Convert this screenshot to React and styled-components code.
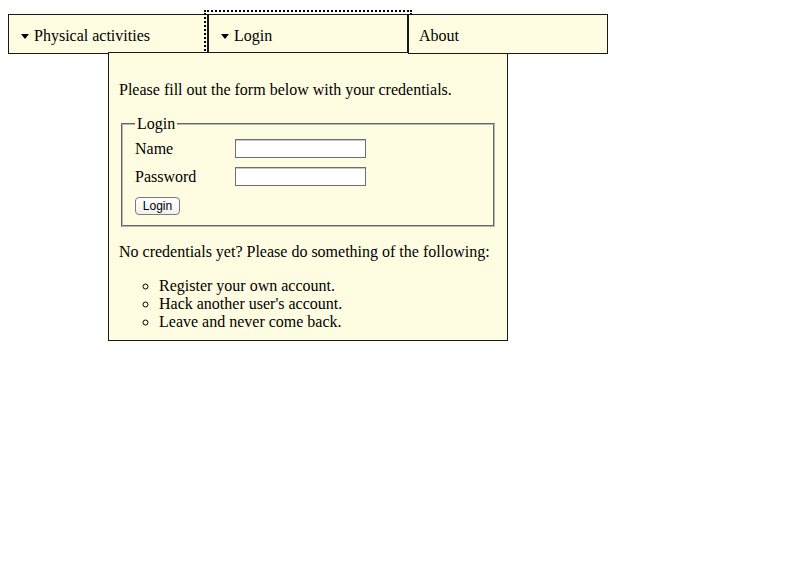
import React from 'react';
import styled, { createGlobalStyle } from 'styled-components';

const GlobalStyle = createGlobalStyle`
  body {
    margin: 0;
    background: #fff;
    font-family: "Liberation Serif", "Times New Roman", serif;
    font-size: 16px;
    color: #000;
  }
`;

const Page = styled.div`
  padding: 14px 8px 0;
  height: 566px;
`;

const MenuBar = styled.nav`
  display: flex;
`;

const MenuItem = styled.div`
  position: relative;
  box-sizing: border-box;
  width: 200px;
  height: 40px;
  padding: 12px 10px 8px;
  border: 1px solid #1a1a1a;
  background: #fffde1;
  line-height: 18px;
  display: flex;
  align-items: center;
  white-space: nowrap;
  outline: ${(p) => (p.$focused ? '2px dotted #000' : 'none')};
  outline-offset: 2px;
`;

const Caret = styled.span`
  display: inline-block;
  width: 0;
  height: 0;
  margin: 1px 5px 0 2px;
  border-left: 4px solid transparent;
  border-right: 4px solid transparent;
  border-top: 5px solid #000;
`;

const Dropdown = styled.div`
  position: absolute;
  top: calc(100% - 1px);
  left: -101px;
  width: 400px;
  box-sizing: border-box;
  padding: 12px 10px 9px;
  border: 1px solid #1a1a1a;
  background: #fffde1;
  white-space: normal;
  line-height: 18px;
`;

const Text = styled.p`
  margin: 16px 0;
`;

const LoginSet = styled.fieldset`
  margin: 0 2px;
  padding: 0 12px 10px;
  border: 2px groove #b8b8b8;
`;

const Legend = styled.legend`
  padding: 0 2px;
  line-height: 18px;
`;

const FormGrid = styled.div`
  display: grid;
  grid-template-columns: 100px auto;
  grid-auto-rows: 23px;
  row-gap: 5px;
  align-items: center;
  margin-top: 4px;
`;

const Input = styled.input`
  box-sizing: border-box;
  width: 131px;
  height: 19px;
  margin: 0;
  border: 1px solid #6e6e6e;
  box-shadow: inset 0 1px 0 #c9c9c9;
  background: #fff;
`;

const Button = styled.button`
  margin-top: 9px;
  box-sizing: border-box;
  width: 45px;
  height: 18px;
  padding: 0;
  border: 1px solid #7a7a7a;
  border-radius: 4px;
  background: linear-gradient(#ffffff, #f1f1f1);
  font-family: "Liberation Sans", Arial, sans-serif;
  font-size: 12px;
  line-height: 16px;
  color: #000;
  display: block;
`;

const Options = styled.ul`
  margin: 16px 0 0;
  padding-left: 40px;
  list-style: circle;
`;

const App = () => (
  <Page>
    <GlobalStyle />
    <MenuBar>
      <MenuItem>
        <Caret />
        Physical activities
      </MenuItem>
      <MenuItem $focused>
        <Caret />
        Login
        <Dropdown>
          <Text>Please fill out the form below with your credentials.</Text>
          <LoginSet>
            <Legend>Login</Legend>
            <FormGrid>
              <label htmlFor="name">Name</label>
              <Input id="name" type="text" />
              <label htmlFor="password">Password</label>
              <Input id="password" type="password" />
            </FormGrid>
            <Button type="button">Login</Button>
          </LoginSet>
          <Text>No credentials yet? Please do something of the following:</Text>
          <Options>
            <li>Register your own account.</li>
            <li>Hack another user's account.</li>
            <li>Leave and never come back.</li>
          </Options>
        </Dropdown>
      </MenuItem>
      <MenuItem>About</MenuItem>
    </MenuBar>
  </Page>
);

export default App;
